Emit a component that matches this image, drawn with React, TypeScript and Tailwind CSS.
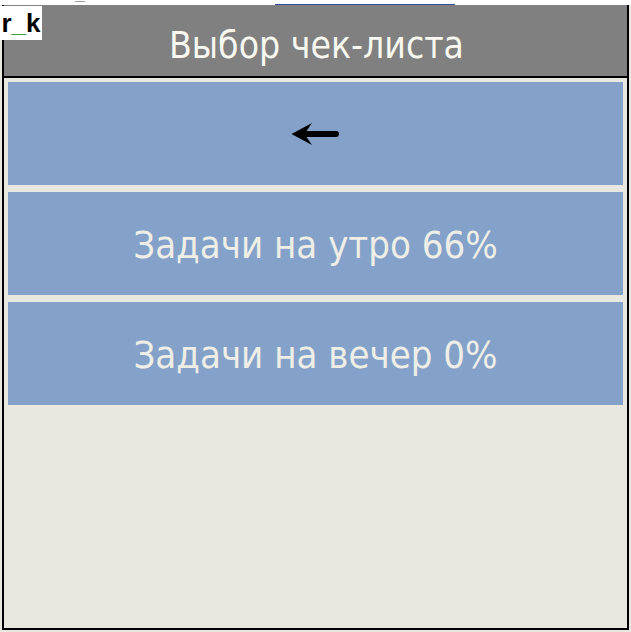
import React from "react";

function Arrow() {
  return (
    <svg width="50" height="24" viewBox="0 0 50 24" className="block">
      <path d="M0.5 12 L21 1 L15.5 9 L45 9 Q48 9 48 12 Q48 15 45 15 L15.5 15 L21 23 Z" fill="#000" />
    </svg>
  );
}

export default function App() {
  const items = ["Задачи на утро 66%", "Задачи на вечер 0%"];
  return (
    <div className="relative w-[631px] h-[632px] bg-[#e8e8e0] flex flex-col" style={{ fontFamily: "'DejaVu Sans Condensed', 'DejaVu Sans', sans-serif" }}>
      <div className="h-[5px] bg-white relative shrink-0">
        <div className="absolute left-[75px] top-[1px] w-[10px] h-[1px] bg-[#a0a0a0]" />
        <div className="absolute left-[275px] top-[4px] w-[180px] h-[1px] bg-[#3050a0]" />
      </div>
      <div className="ml-[2px] w-[627px] h-[625px] border-2 border-t-0 border-black flex flex-col">
        <div className="h-[73px] bg-[#808080] border-b-2 border-black flex items-center justify-center shrink-0 pl-[2px] pt-[9px]">
          <span className="text-[37px] text-[#f8f8f0] leading-none">Выбор чек-листа</span>
        </div>
        <div className="flex flex-col gap-[7px] pt-[4px] px-[4px]">
          <div className="h-[103px] bg-[#84a2c9] flex items-center justify-center">
            <Arrow />
          </div>
          {items.map((t) => (
            <div key={t} className="h-[103px] bg-[#84a2c9] flex items-center justify-center pt-[2px]">
              <span className="text-[38px] text-[#eeeee6] leading-none">{t}</span>
            </div>
          ))}
        </div>
      </div>
      <div className="absolute left-0 top-[6px] w-[42px] h-[34px] bg-white flex items-center justify-center">
        <span className="text-[26px] font-bold leading-none text-black" style={{ fontFamily: "'Liberation Sans', sans-serif" }}>r<span className="text-[#40a040]">_</span>k</span>
      </div>
    </div>
  );
}
